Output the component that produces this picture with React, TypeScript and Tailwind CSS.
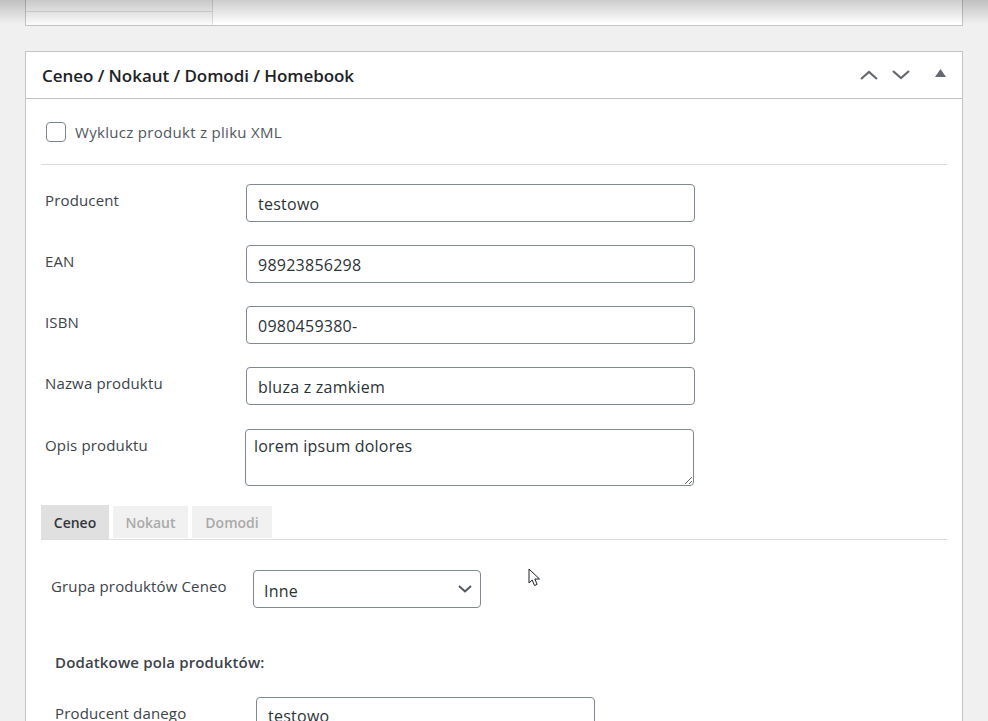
const fontStack = { fontFamily: '"Open Sans", "Noto Sans", sans-serif' };

const fields = [
  { label: "Producent", value: "testowo" },
  { label: "EAN", value: "98923856298" },
  { label: "ISBN", value: "0980459380-" },
  { label: "Nazwa produktu", value: "bluza z zamkiem" },
];

function Field({ label, value }: { label: string; value: string }) {
  return (
    <div className="flex items-start">
      <label className="w-[205px] pt-[5px] pl-[4px] text-[15px] leading-[22px] tracking-[0.15px] text-[#3c434a]">{label}</label>
      <input
        readOnly
        defaultValue={value}
        className="h-[38px] w-[449px] rounded-[4px] border border-[#7e8993] bg-white px-[11px] pt-[1px] text-[16px] tracking-[0.25px] text-[#2c3338] outline-none"
      />
    </div>
  );
}

export default function App() {
  return (
    <div style={fontStack} className="relative h-[721px] w-[988px] overflow-hidden bg-[#f0f0f1] px-[25px]">
      {/* card cut off by the top of the window */}
      <div className="flex h-[26px] border-x border-b border-[#c3c4c7] bg-white">
        <div className="h-full w-[187px] border-r border-[#dcdcde] bg-[#fafafa]">
          <div className="h-[12px] border-b border-[#dcdcde]" />
        </div>
      </div>

      {/* sticky header shadow */}
      <div className="pointer-events-none absolute inset-x-0 top-0 h-[24px] bg-gradient-to-b from-[#00000033] to-transparent" />

      <div className="mt-[25px] border border-[#c3c4c7] bg-white">
        <div className="flex h-[47px] items-center justify-between border-b border-[#c3c4c7] pl-[16px] pr-[16px]">
          <h2 className="pt-[1px] text-[17px] font-semibold tracking-[-0.05px] text-[#1d2327]">Ceneo / Nokaut / Domodi / Homebook</h2>
          <div className="flex items-center">
            <svg width="18" height="10" viewBox="0 0 18 10" fill="none" stroke="#646970" strokeWidth="2.2" className="mr-[14px]">
              <path d="M1 9l8-7 8 7" />
            </svg>
            <svg width="18" height="10" viewBox="0 0 18 10" fill="none" stroke="#646970" strokeWidth="2.2" className="mr-[25px]">
              <path d="M1 1l8 7 8-7" />
            </svg>
            <svg width="11" height="8" viewBox="0 0 11 8" fill="#646970" className="mb-[5px]">
              <path d="M5.5 0L11 8H0z" />
            </svg>
          </div>
        </div>

        <div className="px-[15px]">
          <div className="flex h-[66px] items-center border-b border-[#dcdcde] pl-[5px] pt-[1px]">
            <span className="h-[20px] w-[20px] rounded-[4px] border border-[#7e8993] bg-white" />
            <span className="ml-[9px] text-[15px] tracking-[0.3px] text-[#50575e]">Wyklucz produkt z pliku XML</span>
          </div>

          <div className="mt-[19px] flex flex-col gap-[23px]">
            {fields.map((f) => (
              <Field key={f.label} label={f.label} value={f.value} />
            ))}
          </div>

          <div className="mt-[24px] flex items-start">
            <label className="w-[204px] pt-[5px] pl-[4px] text-[15px] leading-[22px] tracking-[0.15px] text-[#3c434a]">Opis produktu</label>
            <textarea
              readOnly
              defaultValue="lorem ipsum dolores"
              className="h-[57px] w-[449px] rounded-[4px] border border-[#7e8993] bg-white px-[8px] py-[2px] text-[16px] leading-[28px] tracking-[0.2px] text-[#2c3338] outline-none"
            />
          </div>

          <div className="mt-[19px] flex gap-[4px] border-b border-[#dcdcde] text-[14px] font-semibold">
            <div className="flex h-[34px] w-[68px] items-center justify-center bg-[#e0e0e0] text-[#32373c]">Ceneo</div>
            <div className="mt-[1px] flex h-[32px] w-[75px] items-center justify-center bg-[#f1f1f1] text-[#aaaaaa]">Nokaut</div>
            <div className="mt-[1px] flex h-[32px] w-[80px] items-center justify-center bg-[#f1f1f1] text-[#aaaaaa]">Domodi</div>
          </div>

          <div className="mt-[30px] flex items-start pl-[10px]">
            <label className="w-[202px] pt-[5px] text-[15px] leading-[22px] tracking-[0.15px] text-[#3c434a]">Grupa produktów Ceneo</label>
            <div className="flex h-[38px] w-[228px] items-center justify-between rounded-[4px] border border-[#7e8993] bg-white pl-[10px] pr-[8px] text-[16px] tracking-[0.25px] text-[#2c3338]">
              <span className="pt-[3px]">Inne</span>
              <svg width="14" height="8" viewBox="0 0 14 8" fill="none" stroke="#50575e" strokeWidth="2">
                <path d="M1 1l6 5.5L13 1" />
              </svg>
            </div>
          </div>

          <p className="mt-[43px] pl-[14px] text-[15px] font-semibold tracking-[0.15px] text-[#3c434a]">Dodatkowe pola produktów:</p>

          <div className="mt-[23px] flex items-start pl-[14px]">
            <label className="w-[201px] pt-[5px] text-[15px] leading-[22px] tracking-[0.15px] text-[#3c434a]">Producent danego</label>
            <input
              readOnly
              defaultValue="testowo"
              className="h-[38px] w-[339px] rounded-[4px] border border-[#7e8993] bg-white px-[11px] pt-[1px] text-[16px] tracking-[0.25px] text-[#2c3338] outline-none"
            />
          </div>
          <div className="h-[60px]" />
        </div>
      </div>

      {/* mouse pointer caught in the screenshot */}
      <svg width="14" height="20" viewBox="0 0 14 20" className="absolute left-[528px] top-[568px]" fill="white" stroke="#1d2327" strokeWidth="1">
        <path d="M1 1v14l3.2-3 2.3 5.5 2.6-1.1L6.8 11H11.5z" />
      </svg>
    </div>
  );
}
